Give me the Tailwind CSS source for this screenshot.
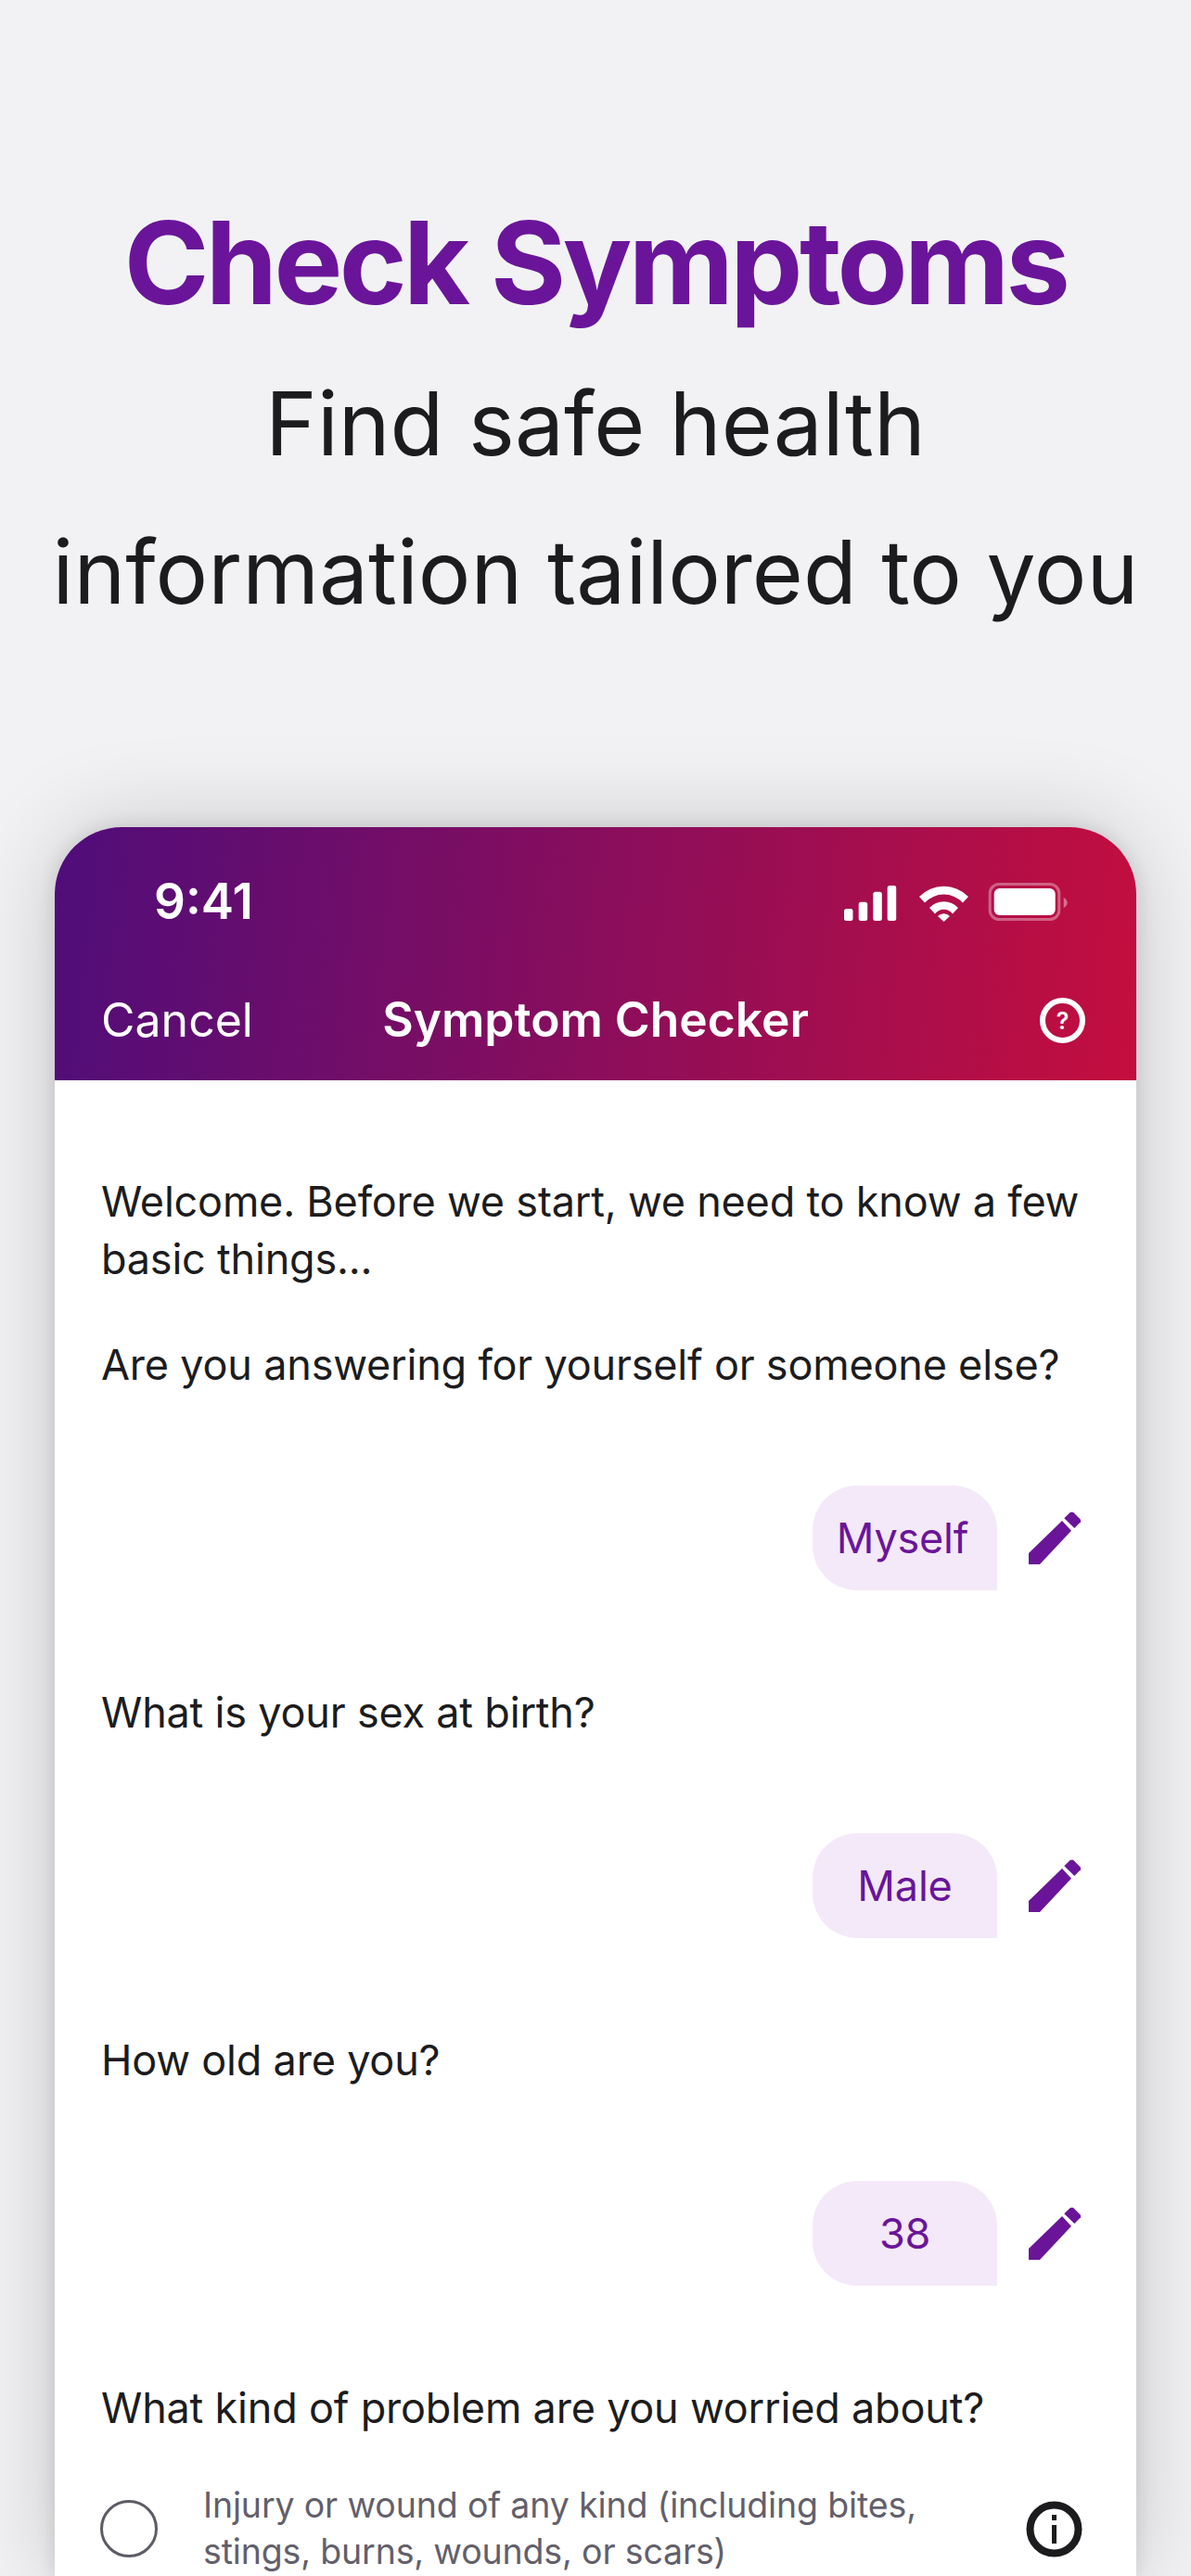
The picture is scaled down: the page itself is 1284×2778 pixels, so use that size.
<!DOCTYPE html>
<html lang="en">
<head>
    <meta charset="UTF-8">
    <meta name="viewport" content="width=device-width, initial-scale=1.0">
    <title>Check Symptoms</title>
    <script src="https://cdn.jsdelivr.net/npm/@tailwindcss/browser@4"></script>
</head>
<body class="bg-[#f2f2f5] font-['Inter',sans-serif] h-[2778px] overflow-hidden">
    <!-- Headline -->
    <div class="pt-[203px] h-[892px] text-center">
        <h1 class="text-[124px] leading-[160px] font-bold tracking-[-3.6px] text-[#6a1599]">Check Symptoms</h1>
        <p class="text-[94.5px] leading-[160px] text-[#1c1c1e] mt-[14px]">Find safe health<br>information tailored to you</p>
    </div>

    <!-- Phone card -->
    <div class="mx-[59px] h-[1886px] rounded-t-[72px] bg-white shadow-[0_0_20px_rgba(0,0,0,0.12),0_0_100px_rgba(0,0,0,0.18)] overflow-hidden">
        <div class="h-[272.5px] bg-[linear-gradient(97deg,#4f0d7a,#c40e3e)] text-white">
            <div class="h-[161px] pl-[107px] pr-[74px] flex items-center justify-between">
                <span class="text-[53px] font-semibold">9:41</span>
                <svg width="241" height="44" viewBox="0 -4 241 44" fill="white">
                    <rect x="0" y="25" width="9.5" height="13" rx="2.5"/>
                    <rect x="15.700" y="17.700" width="9.5" height="20.300" rx="2.5"/>
                    <rect x="31.300" y="6.700" width="9.5" height="31.300" rx="2.5"/>
                    <rect x="46.700" y="0" width="9.5" height="38" rx="2.5"/>
                    <path d="M81 12a37 37 0 0 1 53 0l-6 6.500a28 28 0 0 0-41 0z"/>
                    <path d="M92 24a21 21 0 0 1 31 0l-6 6.500a12 12 0 0 0-19 0z"/>
                    <path d="M101 33a9 9 0 0 1 13 0l-6.500 6z"/>
                    <rect x="157.200" y="-1.500" width="74.600" height="38" rx="10" fill="none" stroke="white" stroke-opacity="0.35" stroke-width="3"/>
                    <rect x="161.700" y="3" width="66" height="29" rx="6"/>
                    <path d="M236.700 13c2.500 1 4 3.500 4 5.500s-1.500 4.500-4 5.500z" fill-opacity="0.4"/>
                </svg>
            </div>
            <div class="relative h-[94px] flex items-center justify-between pl-[50px] pr-[55px]">
                <span class="text-[50px]">Cancel</span>
                <span class="absolute inset-x-0 text-center text-[51.500px] font-semibold">Symptom Checker</span>
                <svg width="49" height="49" viewBox="0 0 49 49" fill="none">
                    <circle cx="24.500" cy="24.500" r="21.500" stroke="white" stroke-width="6"/>
                    <text x="24.500" y="33.500" text-anchor="middle" fill="white" font-size="25" font-weight="600" font-family="Inter">?</text>
                </svg>
            </div>
        </div>

        <div class="pl-[50px] pr-[51px] pt-[100.500px] text-[45px] leading-[62px] tracking-[-0.2px] text-[#1c1c1e]">
            <p>Welcome. Before we start, we need to know a few basic things...</p>
            <p class="mt-[52px]">Are you answering for yourself or someone else?</p>

            <div class="mt-[99px] pr-[9px] flex justify-end items-center gap-[34px]">
                <div class="w-[199px] h-[113px] pr-[5px] rounded-[48px] rounded-br-none bg-[#f4e9f9] text-[#6a1599] flex items-center justify-center">Myself</div>
                <svg width="56" height="57" viewBox="0 0 56 57" fill="#6a1599"><path d="M0 45 36 10 46 20.700 12 57H0z"/><path d="M38.300 7.300 45 .7h3l8 8v2.600L49.300 18z"/></svg>
            </div>
            <p class="mt-[101px]">What is your sex at birth?</p>

            <div class="mt-[99px] pr-[9px] flex justify-end items-center gap-[34px]">
                <div class="w-[199px] h-[113px] rounded-[48px] rounded-br-none bg-[#f4e9f9] text-[#6a1599] flex items-center justify-center">Male</div>
                <svg width="56" height="57" viewBox="0 0 56 57" fill="#6a1599"><path d="M0 45 36 10 46 20.700 12 57H0z"/><path d="M38.300 7.300 45 .7h3l8 8v2.600L49.300 18z"/></svg>
            </div>
            <p class="mt-[101px]">How old are you?</p>

            <div class="mt-[99px] pr-[9px] flex justify-end items-center gap-[34px]">
                <div class="w-[199px] h-[113px] rounded-[48px] rounded-br-none bg-[#f4e9f9] text-[#6a1599] flex items-center justify-center">38</div>
                <svg width="56" height="57" viewBox="0 0 56 57" fill="#6a1599"><path d="M0 45 36 10 46 20.700 12 57H0z"/><path d="M38.300 7.300 45 .7h3l8 8v2.600L49.300 18z"/></svg>
            </div>
            <p class="mt-[101px]">What kind of problem are you worried about?</p>

            <div class="mt-[49px] flex items-center">
                <div class="w-[62px] h-[62px] ml-[-1px] rounded-full border-[3px] border-[#5f5b66] shrink-0"></div>
                <p class="ml-[49px] w-[840px] text-[37.500px] leading-[50px] tracking-[-0.15px] text-[#635f6b]">Injury or wound of any kind (including bites,<br>stings, burns, wounds, or scars)</p>
                <svg class="ml-auto mr-[7px]" width="61" height="61" viewBox="0 0 61 61" fill="none">
                    <circle cx="30.500" cy="30.500" r="26" stroke="#1c1c1e" stroke-width="8"/>
                    <rect x="28" y="26" width="5" height="20" fill="#1c1c1e"/>
                    <rect x="28" y="15" width="5" height="6" fill="#1c1c1e"/>
                </svg>
            </div>
        </div>
    </div>
</body>
</html>
